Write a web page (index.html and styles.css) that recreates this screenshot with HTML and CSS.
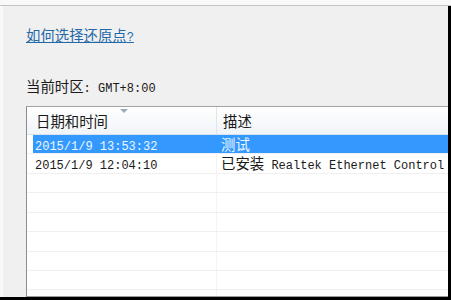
FILE: index.html
```html
<!DOCTYPE html>
<html lang="zh-CN">
<head>
    <meta charset="UTF-8">
    <title>系统还原</title>
    <link rel="stylesheet" href="styles.css">
</head>
<body>
    <div class="titlebar"></div>
    <div class="frame">
        <div class="panel">
            <a class="help-link" href="#">如何选择还原点<span class="en">?</span></a>
            <div class="zone">当前时区<span class="en">: GMT+8:00</span></div>

            <div class="list">
                <div class="list-head">
                    <div class="head-cell head-date">日期和时间<span class="sort-arrow"></span></div>
                    <div class="head-cell head-desc">描述</div>
                </div>
                <div class="list-body">
                    <div class="row selected">
                        <div class="cell cell-date"><span class="en">2015/1/9 13:53:32</span></div>
                        <div class="cell cell-desc">测试</div>
                    </div>
                    <div class="row">
                        <div class="cell cell-date"><span class="en">2015/1/9 12:04:10</span></div>
                        <div class="cell cell-desc">已安装<span class="en"> Realtek Ethernet Control</span></div>
                    </div>
                    <div class="row"><div class="cell cell-date"></div><div class="cell cell-desc"></div></div>
                    <div class="row"><div class="cell cell-date"></div><div class="cell cell-desc"></div></div>
                    <div class="row"><div class="cell cell-date"></div><div class="cell cell-desc"></div></div>
                    <div class="row"><div class="cell cell-date"></div><div class="cell cell-desc"></div></div>
                    <div class="row"><div class="cell cell-date"></div><div class="cell cell-desc"></div></div>
                    <div class="row"><div class="cell cell-date"></div><div class="cell cell-desc"></div></div>
                    <div class="row"><div class="cell cell-date"></div><div class="cell cell-desc"></div></div>
                    <div class="row"><div class="cell cell-date"></div><div class="cell cell-desc"></div></div>
                </div>
            </div>
        </div>
        <div class="edge"></div>
    </div>
    <div class="bottom-edge"></div>
</body>
</html>
```

FILE: styles.css
```css
body {
    margin: 0;
    height: 300px;
    display: flex;
    flex-direction: column;
    overflow: hidden;
    background-color: #f0f0f0;
    font-family: "Noto Sans CJK SC", sans-serif;
    font-size: 14.4px;
    color: #1a1a1a;
}
.en {
    font-family: "Liberation Mono", monospace;
    font-size: 12px;
}
.titlebar {
    height: 5px;
    background-color: #f9f9f9;
    border-bottom: 1px solid #c4c4c4;
}
.frame {
    flex: 1;
    display: flex;
    min-height: 0;
}
.panel {
    flex: 1;
    display: flex;
    flex-direction: column;
    min-height: 0;
    overflow: hidden;
    padding-left: 23px;
    border-left: 3px solid #f7f9fb;
}
.edge {
    width: 3px;
    background-color: #000;
}
.bottom-edge {
    height: 3px;
    background-color: #000;
}
.help-link {
    align-self: flex-start;
    margin-top: 20px;
    line-height: 18px;
    color: #2468a8;
    text-decoration: underline;
}
.zone {
    margin-top: 30px;
    line-height: 18px;
}
.list {
    flex: 1;
    min-height: 0;
    width: 440px;
    margin-top: 8px;
    overflow: hidden;
    background-color: #fff;
    border: 1px solid #a3a3a3;
    border-left-color: #8a8c90;
    border-right: none;
    border-bottom-color: #9a9a9a;
}
.list-head {
    display: flex;
    height: 27px;
    line-height: 27px;
    background: linear-gradient(#ffffff, #f1f4f8);
    border-bottom: 1px solid #d6e3ec;
}
.head-cell {
    position: relative;
}
.head-date {
    width: 190px;
    padding-left: 9px;
    box-sizing: border-box;
    border-right: 1px solid #e1e5ea;
}
.head-desc {
    flex: 1;
    padding-left: 6px;
}
.sort-arrow {
    position: absolute;
    top: 2px;
    left: 93px;
    border-left: 4px solid transparent;
    border-right: 4px solid transparent;
    border-top: 4px solid #9aabbd;
}
.row {
    display: flex;
    height: 18.43px;
    line-height: 18px;
    border-bottom: 1px solid #f0f0f0;
    white-space: nowrap;
}
.cell-date {
    width: 184px;
    margin-left: 6px;
    padding-left: 2px;
    box-sizing: border-box;
    border-right: 1px solid #f3f3f3;
}
.cell-desc {
    flex: 1;
    padding-left: 4px;
}
.row.selected .cell {
    background-color: #3399ff;
    color: #eef7ff;
    border-right-color: #3399ff;
}
```
